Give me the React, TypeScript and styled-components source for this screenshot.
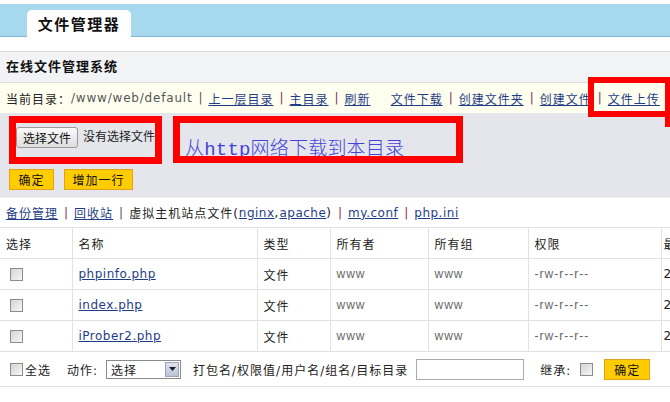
import styled, { createGlobalStyle } from "styled-components";

const GlobalStyle = createGlobalStyle`
  html, body {
    margin: 0;
    padding: 0;
    background: #fff;
  }
  body {
    width: 670px;
    height: 402px;
    overflow: hidden;
    font-family: "DejaVu Sans", "Noto Sans CJK SC", sans-serif;
    font-size: 12px;
    letter-spacing: 1px;
    color: #222;
  }
`;

const files = [
  { name: "phpinfo.php", time: "2014-05-08 10:21:36" },
  { name: "index.php", time: "2014-05-08 10:21:36" },
  { name: "iProber2.php", time: "2014-05-08 10:21:36" },
];

const App: React.FC = () => {
  return (
    <>
      <GlobalStyle />
      <TopBar>
        <Tab>文件管理器</Tab>
      </TopBar>

      <Panel>
        <PanelTitle>在线文件管理系统</PanelTitle>
        <DirBar>
          <span>当前目录：</span>
          <Path>/www/web/default</Path>
          <Sep $plain>|</Sep>
          <Link>上一层目录</Link>
          <Sep>|</Sep>
          <Link>主目录</Link>
          <Sep>|</Sep>
          <Link>刷新</Link>
          <Link $gap={20}>文件下载</Link>
          <Sep>|</Sep>
          <Link>创建文件夹</Link>
          <Sep>|</Sep>
          <Link>创建文件</Link>
          <Sep>|</Sep>
          <Link>文件上传</Link>
        </DirBar>

        <UploadArea>
          <UploadRow>
            <FileBox>
              <PickButton>选择文件</PickButton>
              <PickHint>没有选择文件</PickHint>
            </FileBox>
            <UrlBox>
              <UrlLink>从http网络下载到本目录</UrlLink>
            </UrlBox>
          </UploadRow>
          <ButtonRow>
            <YellowButton $w={45}>确定</YellowButton>
            <YellowButton $w={69}>增加一行</YellowButton>
          </ButtonRow>
        </UploadArea>

        <MarkBox />
        <MarkTail />
      </Panel>

      <LinksRow>
        <Link>备份管理</Link>
        <Sep>|</Sep>
        <Link>回收站</Link>
        <Sep $plain>|</Sep>
        <span>虚拟主机站点文件(</span>
        <Link $latin>nginx</Link>
        <span>,</span>
        <Link $latin>apache</Link>
        <span>)</span>
        <Sep>|</Sep>
        <Link $latin>my.conf</Link>
        <Sep>|</Sep>
        <Link $latin>php.ini</Link>
      </LinksRow>

      <FileTable>
        <colgroup>
          <col style={{ width: 72 }} />
          <col style={{ width: 185 }} />
          <col style={{ width: 73 }} />
          <col style={{ width: 98 }} />
          <col style={{ width: 100 }} />
          <col style={{ width: 133 }} />
          <col style={{ width: 160 }} />
        </colgroup>
        <thead>
          <tr>
            <Th>选择</Th>
            <Th>名称</Th>
            <Th>类型</Th>
            <Th>所有者</Th>
            <Th>所有组</Th>
            <Th>权限</Th>
            <Th $tight>最后修改时间</Th>
          </tr>
        </thead>
        <tbody>
          {files.map((f) => (
            <tr key={f.name}>
              <Td>
                <Check $left={4} />
              </Td>
              <Td>
                <Link $latin>{f.name}</Link>
              </Td>
              <Td>文件</Td>
              <Td $muted>www</Td>
              <Td $muted>www</Td>
              <Td $muted>-rw-r--r--</Td>
              <Td $tight>{f.time}</Td>
            </tr>
          ))}
          <tr>
            <FootCell colSpan={7}>
              <FootBar>
                <Check />
                <FootText $gap={2}>全选</FootText>
                <FootText $gap={16}>动作:</FootText>
                <Select>
                  <span>选择</span>
                  <SelectArrow>
                    <svg width="7" height="4" viewBox="0 0 7 4">
                      <path d="M0 0h7L3.5 4z" fill="#1a1a2e" />
                    </svg>
                  </SelectArrow>
                </Select>
                <FootText $gap={12}>打包名/权限值/用户名/组名/目标目录</FootText>
                <TextBox />
                <FootText $gap={16}>继承:</FootText>
                <Check $left={9} />
                <YellowButton $w={46} $left={11}>
                  确定
                </YellowButton>
              </FootBar>
            </FootCell>
          </tr>
        </tbody>
      </FileTable>
    </>
  );
};

export default App;

const TopBar = styled.div`
  margin-top: 4px;
  height: 32px;
  padding-left: 27px;
  display: flex;
  align-items: flex-end;
  background: #a6d8ee;
  border-bottom: 1px solid #80b6d3;
`;

const Tab = styled.div`
  width: 104px;
  height: 27px;
  margin-bottom: -1px;
  display: flex;
  align-items: center;
  justify-content: center;
  background: #fff;
  border-radius: 5px 5px 0 0;
  font-size: 15px;
  font-weight: bold;
  letter-spacing: 1.5px;
  color: #111;
`;

const Panel = styled.div`
  position: relative;
  margin-top: 14px;
  border-top: 1px solid #dcdcdc;
  background: #e4e6eb;
`;

const PanelTitle = styled.div`
  height: 30px;
  line-height: 30px;
  padding-left: 6px;
  background: #f2f3f5;
  border-bottom: 1px solid #dcdcdc;
  font-size: 13px;
  font-weight: bold;
  color: #111;
`;

const DirBar = styled.div`
  height: 30px;
  padding-left: 6px;
  display: flex;
  align-items: center;
  white-space: nowrap;
  background: #fffff0;
`;

const Path = styled.span`
  color: #555;
  letter-spacing: 0.8px;
`;

const Sep = styled.span<{ $plain?: boolean }>`
  margin: 0 6px;
  letter-spacing: 0;
  color: ${(p) => (p.$plain ? "#555" : "#8a2c5e")};
`;

const Link = styled.a<{ $gap?: number; $latin?: boolean }>`
  margin-left: ${(p) => p.$gap ?? 0}px;
  letter-spacing: ${(p) => (p.$latin ? "0.5px" : "1px")};
  color: #1f3d87;
  text-decoration: underline;
  cursor: pointer;
`;

const UploadArea = styled.div`
  padding: 3px 0 7px 9px;
`;

const UploadRow = styled.div`
  display: flex;
  gap: 11px;
`;

const FileBox = styled.div`
  box-sizing: border-box;
  width: 153px;
  height: 48px;
  padding-top: 4px;
  display: flex;
  align-items: flex-start;
  overflow: hidden;
  border: 7px solid #ff0000;
  white-space: nowrap;
`;

const PickButton = styled.button`
  flex: none;
  height: 21px;
  padding: 0 6px;
  font: inherit;
  letter-spacing: 0;
  color: #111;
  background: linear-gradient(#fafafa, #dedede);
  border: 1px solid #9a9a9a;
  border-radius: 3px;
`;

const PickHint = styled.span`
  margin-left: 5px;
  line-height: 21px;
  letter-spacing: 0;
`;

const UrlBox = styled.div`
  box-sizing: border-box;
  width: 290px;
  height: 47px;
  padding: 17px 0 0 5px;
  overflow: hidden;
  border: 7px solid #ff0000;
  white-space: nowrap;
`;

const UrlLink = styled.a`
  font-family: "Liberation Mono", "Noto Sans CJK SC", monospace;
  font-size: 19px;
  font-weight: 300;
  line-height: 21px;
  letter-spacing: 0.2px;
  color: #4343dc;
  text-decoration: none;
`;

const ButtonRow = styled.div`
  margin-top: 5px;
  display: flex;
  gap: 10px;
`;

const YellowButton = styled.button<{ $w: number; $left?: number }>`
  flex: none;
  width: ${(p) => p.$w}px;
  height: 21px;
  margin-left: ${(p) => p.$left ?? 0}px;
  padding: 0;
  font: inherit;
  letter-spacing: 1px;
  color: #111;
  background: #ffcc00;
  border: 1px solid #e3a21a;
`;

const MarkBox = styled.div`
  position: absolute;
  left: 588px;
  top: 25px;
  box-sizing: border-box;
  width: 82px;
  height: 40px;
  border: 6px solid #ff0000;
  border-right: 0;
`;

const MarkTail = styled.div`
  position: absolute;
  left: 665px;
  top: 25px;
  width: 5px;
  height: 50px;
  background: #ff0000;
`;

const LinksRow = styled.div`
  height: 29px;
  padding-left: 6px;
  display: flex;
  align-items: center;
  white-space: nowrap;
  border-top: 1px solid #eeeff2;
`;

const FileTable = styled.table`
  width: 821px;
  table-layout: fixed;
  border-collapse: collapse;
`;

const Th = styled.th<{ $tight?: boolean }>`
  height: 30px;
  padding: 0 6px 0 ${(p) => (p.$tight ? 2 : 6)}px;
  text-align: left;
  font-weight: normal;
  white-space: nowrap;
  border: 1px solid #e2e2e2;
  &:first-child {
    border-left: 0;
  }
`;

const Td = styled.td<{ $muted?: boolean; $tight?: boolean }>`
  height: 30px;
  padding: 0 6px 0 ${(p) => (p.$tight ? 2 : 6)}px;
  white-space: nowrap;
  color: ${(p) => (p.$muted ? "#666" : "#222")};
  font-family: ${(p) =>
    p.$muted ? '"Liberation Sans", "Noto Sans CJK SC", sans-serif' : "inherit"};
  border: 1px solid #e2e2e2;
  &:first-child {
    border-left: 0;
  }
`;

const Check = styled.span<{ $left?: number }>`
  display: inline-block;
  flex: none;
  box-sizing: border-box;
  width: 13px;
  height: 13px;
  margin-left: ${(p) => p.$left ?? 0}px;
  vertical-align: middle;
  border: 1px solid #8c8c8c;
  background: linear-gradient(135deg, #d4d4d4, #f7f7f7);
`;

const FootCell = styled.td`
  height: 34px;
  padding: 0 0 0 10px;
  border: 1px solid #e2e2e2;
  border-left: 0;
`;

const FootBar = styled.div`
  display: flex;
  align-items: center;
  white-space: nowrap;
`;

const FootText = styled.span<{ $gap: number }>`
  margin-left: ${(p) => p.$gap}px;
`;

const Select = styled.div`
  flex: none;
  box-sizing: border-box;
  width: 75px;
  height: 19px;
  margin-left: 8px;
  padding: 0 1px 0 4px;
  display: flex;
  align-items: center;
  justify-content: space-between;
  border: 1px solid #8a8a8a;
  background: #fff;
`;

const SelectArrow = styled.span`
  width: 14px;
  height: 15px;
  display: flex;
  align-items: center;
  justify-content: center;
  background: linear-gradient(#dfe3ee, #b9c2d8);
  border: 1px solid #9aa4bd;
  box-sizing: border-box;
`;

const TextBox = styled.div`
  flex: none;
  box-sizing: border-box;
  width: 108px;
  height: 21px;
  margin-left: 8px;
  border: 1px solid #aaa;
  background: #fff;
`;
